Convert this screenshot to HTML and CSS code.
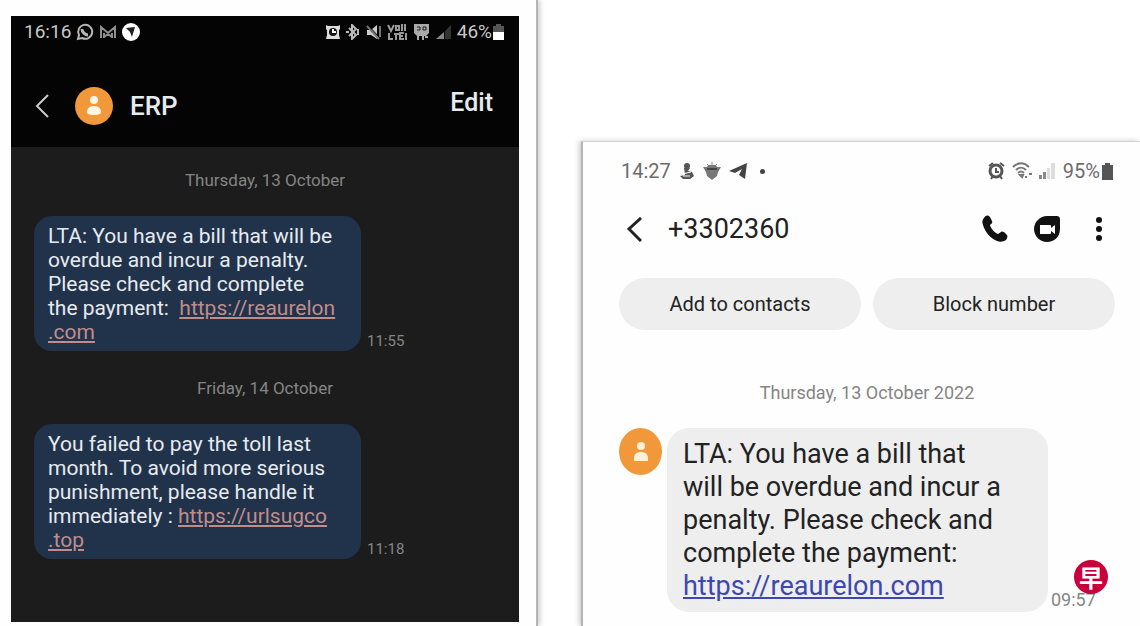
FILE: index.html
```html
<!DOCTYPE html>
<html lang="en">
<head>
    <meta charset="UTF-8">
    <meta name="viewport" content="width=device-width, initial-scale=1.0">
    <title>Messages</title>
    <link rel="stylesheet" href="styles.css">
</head>
<body>
    <div id="container">
        <section class="sheet sheet-left">
            <div class="phone dark">
                <div class="statusbar">
                    <span class="clock">16:16</span>
                    <svg width="18" height="18" viewBox="0 0 18 18" fill="none" stroke="#b5b5b5" stroke-width="2">
                        <path d="M2 16l1-4a7 7 0 1 1 3 3z"/>
                        <path d="M6 6c0 3 3 6 6 6" stroke-width="3"/>
                    </svg>
                    <svg width="18" height="14" viewBox="0 0 18 14" fill="none" stroke="#8f8f8f" stroke-width="2">
                        <path d="M2 13V2l7 6 7-6v11M5 13V8M13 13V8M5 12l4-3 4 3"/>
                    </svg>
                    <svg width="18" height="18" viewBox="0 0 18 18">
                        <circle cx="9" cy="9" r="9" fill="#fff"/>
                        <path d="M4 5l9-1-3 10-2-5z" fill="#222"/>
                    </svg>
                    <span class="spacer"></span>
                    <div class="status-icons">
                        <svg width="14" height="16" viewBox="0 0 14 16">
                            <path d="M0 1l2 1h10l2-1v4l-1 1v5l1 4H0l1-4V6L0 5z" fill="#ddd"/>
                            <circle cx="7" cy="8" r="4" fill="#111"/>
                            <path d="M7 5v3h3" stroke="#fff" stroke-width="2" fill="none"/>
                        </svg>
                        <svg width="14" height="16" viewBox="0 0 14 16" fill="none" stroke="#bbb" stroke-width="2">
                            <path d="M3 4l7 7-4 4V1l4 4-7 7M12 5v6"/>
                            <path d="M0 8h3"/>
                        </svg>
                        <svg width="15" height="16" viewBox="0 0 15 16">
                            <path d="M1 6h4l6-5v14l-6-4H1z" fill="#ccc"/>
                            <path d="M1 2l12 13M14 2v11" stroke="#777" stroke-width="2"/>
                            <path d="M2 1l11 12" stroke="#050505" stroke-width="1"/>
                        </svg>
                        <svg width="20" height="18" viewBox="0 0 20 18" fill="none" stroke="#999" stroke-width="2">
                            <path d="M1 2l3 6 3-6M9 3h3v4H9zM15 1v7M18 1v7"/>
                            <path d="M2 10v6h4M7 11h5M9 11v6M17 10h-4v6h4M13 13h3M19 10v7"/>
                        </svg>
                        <svg width="17" height="18" viewBox="0 0 17 18">
                            <path d="M1 1h15v9l-3 3H4l-3-3z" fill="#aaa"/>
                            <path d="M4 4h3v3H4M10 4h3v3h-3z" fill="none" stroke="#222" stroke-width="1"/>
                            <path d="M5 12v5M10 12v5M12 14h3" stroke="#aaa" stroke-width="2"/>
                        </svg>
                        <svg width="16" height="16" viewBox="0 0 16 16">
                            <path d="M0 15L8 8v7z" fill="#888"/>
                            <path d="M9 7l6-6v14H9z" fill="#333"/>
                        </svg>
                    </div>
                    <span class="clock">46%</span>
                    <svg class="battery" width="11" height="16" viewBox="0 0 11 16">
                        <path d="M3 0h5v2h3v6H0V2h3z" fill="#555"/>
                        <path d="M0 8h11v8H0z" fill="#fff"/>
                    </svg>
                </div>
                <header class="chat-header">
                    <button class="back" aria-label="Back">
                        <svg width="14" height="24" viewBox="0 0 14 24" fill="none" stroke="currentColor" stroke-width="2">
                            <path d="M13 1L2 12l11 11"/>
                        </svg>
                    </button>
                    <span class="avatar">
                        <svg width="14" height="20" viewBox="0 0 14 20" fill="#fff6e4">
                            <circle cx="7" cy="4" r="4"/>
                            <path d="M0 16c0-4 3-6 7-6s7 2 7 6c0 2-2 3-7 3s-7-1-7-3z"/>
                        </svg>
                    </span>
                    <h1>ERP</h1>
                    <button class="edit">Edit</button>
                </header>
                <main class="thread">
                    <p class="date">Thursday, 13 October</p>
                    <div class="message">
                        <p class="bubble">LTA: You have a bill that will be<br>overdue and incur a penalty.<br>Please check and complete<br>the payment:&nbsp; <a href="#">https://reaurelon<br>.com</a></p>
                        <time>11:55</time>
                    </div>
                    <p class="date">Friday, 14 October</p>
                    <div class="message">
                        <p class="bubble">You failed to pay the toll last<br>month. To avoid more serious<br>punishment, please handle it<br>immediately : <a href="#">https://urlsugco<br>.top</a></p>
                        <time>11:18</time>
                    </div>
                </main>
            </div>
        </section>

        <section class="sheet sheet-right">
            <div class="phone light">
                <div class="statusbar">
                    <span class="clock">14:27</span>
                    <svg width="16" height="18" viewBox="0 0 16 18" fill="#555">
                        <circle cx="8" cy="4" r="3"/>
                        <path d="M5 6h6l-2 3 4 1 2 4-4 3H4l-3-3 5-1z"/>
                        <path d="M3 12l9-2M4 14h7" stroke="#fff" stroke-width="1"/>
                    </svg>
                    <svg width="18" height="18" viewBox="0 0 18 18" fill="#777">
                        <path d="M0 5h4l1-2h8l1 2h4l-3 5-1 4-5 4-5-4-1-4z"/>
                        <path d="M4 2l2 2M9 0v3M14 2l-2 2" stroke="#888" stroke-width="1"/>
                        <path d="M4 7h10" stroke="#444" stroke-width="2"/>
                    </svg>
                    <svg width="18" height="16" viewBox="0 0 18 16" fill="#444">
                        <path d="M0 8L18 0l-2 16-6-4 3-6-7 4z"/>
                    </svg>
                    <span class="dot"></span>
                    <span class="spacer"></span>
                    <div class="status-icons">
                        <svg width="17" height="18" viewBox="0 0 17 18" fill="none" stroke="#555">
                            <circle cx="8" cy="9" r="6" stroke-width="3"/>
                            <path d="M8 6v4h3" stroke-width="2"/>
                            <path d="M1 4l4-3M16 4l-4-3M3 17l2-3M14 17l-2-3" stroke-width="2"/>
                        </svg>
                        <svg width="20" height="18" viewBox="0 0 20 18" fill="none" stroke="#777" stroke-width="2">
                            <path d="M1 5c5-5 11-5 16 0M4 8c3-3 7-3 10 0M6 11c2-2 4-2 6 0"/>
                            <path d="M8 13h3l-1 2zM13 15h2M17 12h3" fill="#777"/>
                        </svg>
                        <svg width="16" height="16" viewBox="0 0 16 16">
                            <path d="M0 12h3v4H0zM4 9h3v7H4z" fill="#888"/>
                            <path d="M8 5h3v11H8zM12 0h4v16h-4z" fill="#ddd"/>
                        </svg>
                    </div>
                    <span class="clock">95%</span>
                    <svg class="battery" width="11" height="17" viewBox="0 0 11 17">
                        <path d="M3 0h5v2h3v15H0V2h3z" fill="#555"/>
                    </svg>
                </div>
                <header class="chat-header">
                    <button class="back" aria-label="Back">
                        <svg width="15" height="25" viewBox="0 0 15 25" fill="none" stroke="currentColor" stroke-width="3">
                            <path d="M14 1L2 12l12 12"/>
                        </svg>
                    </button>
                    <h1>+3302360</h1>
                    <button aria-label="Call">
                        <svg width="26" height="28" viewBox="0 0 26 28">
                            <path d="M2 3C4 0 6 0 8 2l2 4c1 2-1 3-2 4 1 4 5 8 8 9l3-2c1-1 2 0 3 0l3 3c1 2 0 3-1 5-3 2-6 2-9 1C8 23 3 17 1 10 0 7 0 5 2 3z" fill="#111"/>
                        </svg>
                    </button>
                    <button aria-label="Video call">
                        <svg width="26" height="28" viewBox="0 0 26 28">
                            <path d="M13 1h9c3 0 4 1 4 4v9c0 8-6 13-13 13S0 21 0 14 6 1 13 1z" fill="#111"/>
                            <path d="M6 10h10q1 0 1 1v2l4-3v9l-4-3v2q0 1-1 1H6z" fill="#fff"/>
                        </svg>
                    </button>
                    <button class="more" aria-label="More options">
                        <svg width="6" height="26" viewBox="0 0 6 26" fill="#111">
                            <circle cx="3" cy="4" r="3"/>
                            <circle cx="3" cy="13" r="3"/>
                            <circle cx="3" cy="22" r="3"/>
                        </svg>
                    </button>
                </header>
                <div class="actions">
                    <button>Add to contacts</button>
                    <button>Block number</button>
                </div>
                <main class="thread">
                    <p class="date">Thursday, 13 October 2022</p>
                    <div class="message">
                        <span class="avatar">
                            <svg width="14" height="20" viewBox="0 0 14 20" fill="#fff0d8">
                                <circle cx="7" cy="4" r="4"/>
                                <path d="M0 19v-3c0-4 3-6 7-6s7 2 7 6v3z"/>
                            </svg>
                        </span>
                        <p class="bubble">LTA: You have a bill that<br>will be overdue and incur a<br>penalty. Please check and<br>complete the payment:<br><a href="#">https://reaurelon.com</a></p>
                        <div class="stamp">
                            <time>09:57</time>
                            <span class="logo">早</span>
                        </div>
                    </div>
                </main>
            </div>
        </section>
    </div>
</body>
</html>
```
FILE: styles.css
```css
* {
    margin: 0;
    padding: 0;
    box-sizing: border-box;
}

body {
    font-family: Roboto, Arial, sans-serif;
    background-color: #fff;
}

button {
    border: none;
    background: none;
    font: inherit;
    color: inherit;
    cursor: pointer;
}

svg {
    display: block;
    flex-shrink: 0;
}

#container {
    display: grid;
    grid-template-columns: 538fr 559fr;
    column-gap: 43px;
    min-height: 100vh;
    overflow: hidden;
}

.sheet {
    background-color: #fefefe;
}

.sheet-left {
    padding: 16px 17px 4px 11px;
    border-right: 2px solid #b4b4b4;
    box-shadow: 2px 0 5px #ccc;
    display: flex;
}

.sheet-right {
    margin-top: 141px;
    border-left: 2px solid #b4b4b4;
    border-top: 1px solid #d4d4d4;
    box-shadow: -2px 0 5px #ccc;
}

.phone {
    flex: 1;
}

.statusbar,
.chat-header,
.status-icons {
    display: flex;
    align-items: center;
}

.spacer {
    flex: 1;
}

.avatar {
    display: flex;
    align-items: center;
    justify-content: center;
    flex-shrink: 0;
    border-radius: 50%;
    background-color: #f0983a;
}

.chat-header h1 {
    flex: 1;
}

.date {
    text-align: center;
}

.message {
    display: flex;
    align-items: flex-end;
}

/* Dark phone */
.dark {
    background-color: #1c1c1c;
    color: #e6ebf0;
}

.dark .statusbar {
    height: 31px;
    padding: 0 15px 0 13px;
    background-color: #040404;
    gap: 5px;
}

.dark .clock {
    font-size: 19px;
    color: #c8c8c8;
}

.dark .status-icons {
    gap: 6px;
}

.dark .battery {
    margin-left: -4px;
}

.dark .chat-header {
    height: 100px;
    padding: 18px 26px 0 24px;
    background-color: #040404;
}

.dark .back {
    color: #ccc;
}

.dark .chat-header .avatar {
    width: 38px;
    height: 38px;
    margin: 0 17px 0 26px;
}

.dark h1 {
    font-size: 26px;
    font-weight: 500;
}

.dark .edit {
    font-size: 25px;
    font-weight: 500;
    padding-bottom: 8px;
}

.dark .thread {
    padding: 21px 23px;
}

.dark .date {
    font-size: 17px;
    line-height: 24px;
    color: #858585;
}

.dark .message {
    margin: 24px 0 25px;
    gap: 6px;
}

.dark .bubble {
    width: 327px;
    padding: 8px 14px 7px;
    border-radius: 18px;
    background-color: #21324b;
    font-size: 21px;
    line-height: 24px;
}

.dark .bubble a {
    color: #c08d8b;
}

.dark time {
    font-size: 15px;
    line-height: 20px;
    color: #858585;
}

/* Light phone */
.light {
    padding: 15px 25px 14px 36px;
    color: #222;
}

.light .statusbar {
    height: 28px;
    padding: 0 2px;
    gap: 8px;
}

.light .clock {
    font-size: 20px;
    color: #6c6c6c;
}

.dot {
    width: 5px;
    height: 5px;
    margin-left: 5px;
    border-radius: 50%;
    background-color: #444;
}

.light .status-icons {
    gap: 7px;
}

.light .battery {
    margin-left: -6px;
}

.light .chat-header {
    height: 88px;
    margin-bottom: 5px;
    padding: 0 13px 0 8px;
    gap: 26px;
}

.light h1 {
    font-size: 27px;
    font-weight: 400;
}

.light .more {
    margin-left: 10px;
}

.actions {
    display: flex;
    gap: 12px;
}

.actions button {
    flex: 1;
    height: 52px;
    border-radius: 26px;
    background-color: #eee;
    font-size: 20px;
}

.light .date {
    padding: 51px 0 23px;
    font-size: 18px;
    line-height: 24px;
    color: #858585;
}

.light .avatar {
    width: 43px;
    height: 47px;
    align-self: flex-start;
}

.light .bubble {
    width: 381px;
    margin: 0 3px 0 5px;
    padding: 10px 16px 9px;
    border-radius: 22px;
    background-color: #eee;
    font-size: 27px;
    line-height: 33px;
}

.light .bubble a {
    color: #3c48b0;
}

.stamp {
    position: relative;
}

.light time {
    font-size: 18px;
    line-height: 24px;
    color: #858585;
}

.logo {
    position: absolute;
    left: 23px;
    bottom: 18px;
    width: 34px;
    height: 34px;
    border-radius: 50%;
    background-color: #c8003c;
    color: #fff;
    font: bold 24px/34px "Noto Sans CJK SC", sans-serif;
    text-align: center;
}
```
